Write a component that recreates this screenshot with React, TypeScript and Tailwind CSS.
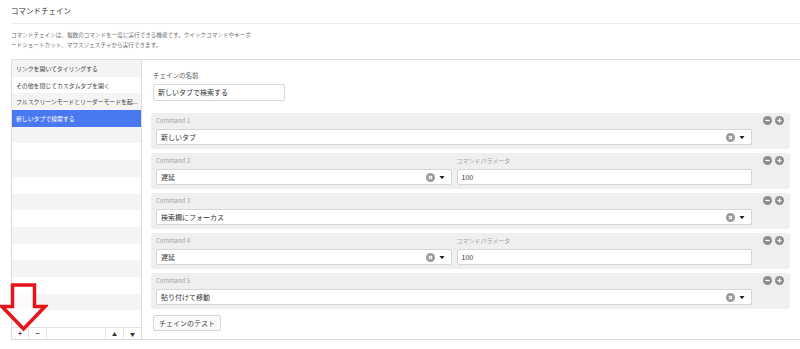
import React from "react";

type Command = { label: string; value: string; param?: string };

const chains = [
  "リンクを開いてタイリングする",
  "その他を閉じてカスタムタブを開く",
  "フルスクリーンモードとリーダーモードを起...",
  "新しいタブで検索する",
];

const commands: Command[] = [
  { label: "Command 1", value: "新しいタブ" },
  { label: "Command 2", value: "遅延", param: "100" },
  { label: "Command 3", value: "検索欄にフォーカス" },
  { label: "Command 4", value: "遅延", param: "100" },
  { label: "Command 5", value: "貼り付けて移動" },
];

function ClearIcon() {
  return (
    <svg width="9" height="9" viewBox="0 0 10 10">
      <circle cx="5" cy="5" r="5" fill="#9a9a9a" />
      <path d="M3.2 3.2L6.8 6.8M6.8 3.2L3.2 6.8" stroke="#fff" strokeWidth="1.3" />
    </svg>
  );
}

function Caret() {
  return (
    <svg width="6" height="5" viewBox="0 0 6 5">
      <path d="M0.5 1h5L3 4.2z" fill="#222" />
    </svg>
  );
}

function RoundBtn({ plus }: { plus?: boolean }) {
  return (
    <svg width="9" height="9" viewBox="0 0 10 10">
      <circle cx="5" cy="5" r="5" fill="#8c8c8c" />
      <path d="M2.6 5h4.8" stroke="#fff" strokeWidth="1.4" />
      {plus && <path d="M5 2.6v4.8" stroke="#fff" strokeWidth="1.4" />}
    </svg>
  );
}

function Select({ value }: { value: string }) {
  return (
    <div className="flex h-[16px] flex-1 items-center rounded-[2px] border border-[#d6d6d6] bg-white pl-[4px] pr-[6px]">
      <span className="flex-1 text-[7px] text-[#333]">{value}</span>
      <ClearIcon />
      <span className="ml-[4px] flex items-center">
        <Caret />
      </span>
    </div>
  );
}

function CommandCard({ cmd }: { cmd: Command }) {
  return (
    <div className="flex h-[36px] rounded-[3px] bg-[#efefef] pl-[5px]">
      <div className="flex w-[596px] gap-[5px] pt-[3px] pb-[4px]">
        <div className="flex flex-1 flex-col">
          <div className="h-[10px] text-[6px] leading-[10px] text-[#a0a0a0]">{cmd.label}</div>
          <div className="mt-[3px] flex">
            <Select value={cmd.value} />
          </div>
        </div>
        {cmd.param && (
          <div className="flex flex-1 flex-col">
            <div className="h-[10px] text-[6px] leading-[10px] text-[#a0a0a0]">コマンドパラメータ</div>
            <div className="mt-[3px] flex h-[16px] items-center rounded-[2px] border border-[#d6d6d6] bg-white pl-[4px] text-[7px] text-[#333]">
              {cmd.param}
            </div>
          </div>
        )}
      </div>
      <div className="ml-[11px] flex gap-[3px] pt-[3px]">
        <RoundBtn />
        <RoundBtn plus />
      </div>
    </div>
  );
}

export default function App() {
  return (
    <div className="relative h-[349px] w-[800px] overflow-hidden bg-white font-['Noto_Sans_CJK_JP',sans-serif] text-[#333]">
      <div className="ml-[11px] border-b border-[#ececec] pt-[5px] pb-[7px] text-[7.5px] leading-[11px]">
        コマンドチェイン
      </div>
      <div className="ml-[11px] mt-[6px] text-[5.6px] leading-[10px] text-[#707070]">
        コマンドチェインは、複数のコマンドを一度に実行できる機能です。クイックコマンドやキーボ
        <br />
        ードショートカット、マウスジェスチャから実行できます。
      </div>

      <div className="ml-[11px] mt-[9px] flex h-[281px] border-y border-[#dcdcdc]">
        <div className="flex w-[131px] flex-col border-x border-[#dcdcdc]">
          {Array.from({ length: 16 }).map((_, i) => {
            const name = chains[i];
            const selected = i === 3;
            return (
              <div
                key={i}
                className={
                  selected
                    ? "flex h-[16.7px] shrink-0 items-center overflow-hidden whitespace-nowrap bg-[#4a78f0] pl-[4px] text-[6px] tracking-[-0.15px] text-white"
                    : i % 2 === 0
                      ? "flex h-[16.7px] shrink-0 items-center overflow-hidden whitespace-nowrap bg-[#f4f4f4] pl-[4px] text-[6px] tracking-[-0.15px] text-[#444]"
                      : "flex h-[16.7px] shrink-0 items-center overflow-hidden whitespace-nowrap bg-white pl-[4px] text-[6px] tracking-[-0.15px] text-[#444]"
                }
              >
                {name}
              </div>
            );
          })}
          <div className="flex h-[12px] shrink-0 border-t border-[#e2e2e2] text-[7px] leading-[11px] text-[#333]">
            <div className="flex w-[17px] items-center justify-center border-r border-[#e2e2e2] font-bold">+</div>
            <div className="flex w-[18px] items-center justify-center border-r border-[#e2e2e2] font-bold">−</div>
            <div className="flex-1 border-r border-[#e2e2e2]" />
            <div className="flex w-[18px] items-center justify-center border-r border-[#e2e2e2] text-[5px]">▲</div>
            <div className="flex w-[17px] items-center justify-center text-[5px]">▼</div>
          </div>
        </div>

        <div className="flex flex-1 flex-col pl-[9px] pt-[11px]">
          <div className="ml-[2px] h-[9px] text-[6.5px] leading-[9px] text-[#555]">チェインの名前</div>
          <div className="ml-[2px] mt-[4px] flex h-[17px] w-[132px] items-center rounded-[2px] border border-[#d6d6d6] pl-[4px] text-[7px] text-[#333]">
            新しいタブで検索する
          </div>
          <div className="mt-[12px] flex w-[639px] flex-col gap-[4px]">
            {commands.map((c) => (
              <CommandCard key={c.label} cmd={c} />
            ))}
          </div>
          <div className="ml-[2px] mt-[6px] flex h-[16px] w-[68px] items-center justify-center rounded-[2px] border border-[#d6d6d6] bg-[#fafafa] text-[7px] text-[#444]">
            チェインのテスト
          </div>
        </div>
      </div>

      <svg className="absolute left-0 top-[283px]" width="48" height="50" viewBox="0 0 48 50">
        <path
          d="M12.5 2H34.5V23.5H45L23.5 46L2 23.5H12.5Z"
          fill="white"
          fillOpacity="0.7"
          stroke="#e8141b"
          strokeWidth="3.5"
          strokeLinejoin="miter"
        />
      </svg>
    </div>
  );
}
